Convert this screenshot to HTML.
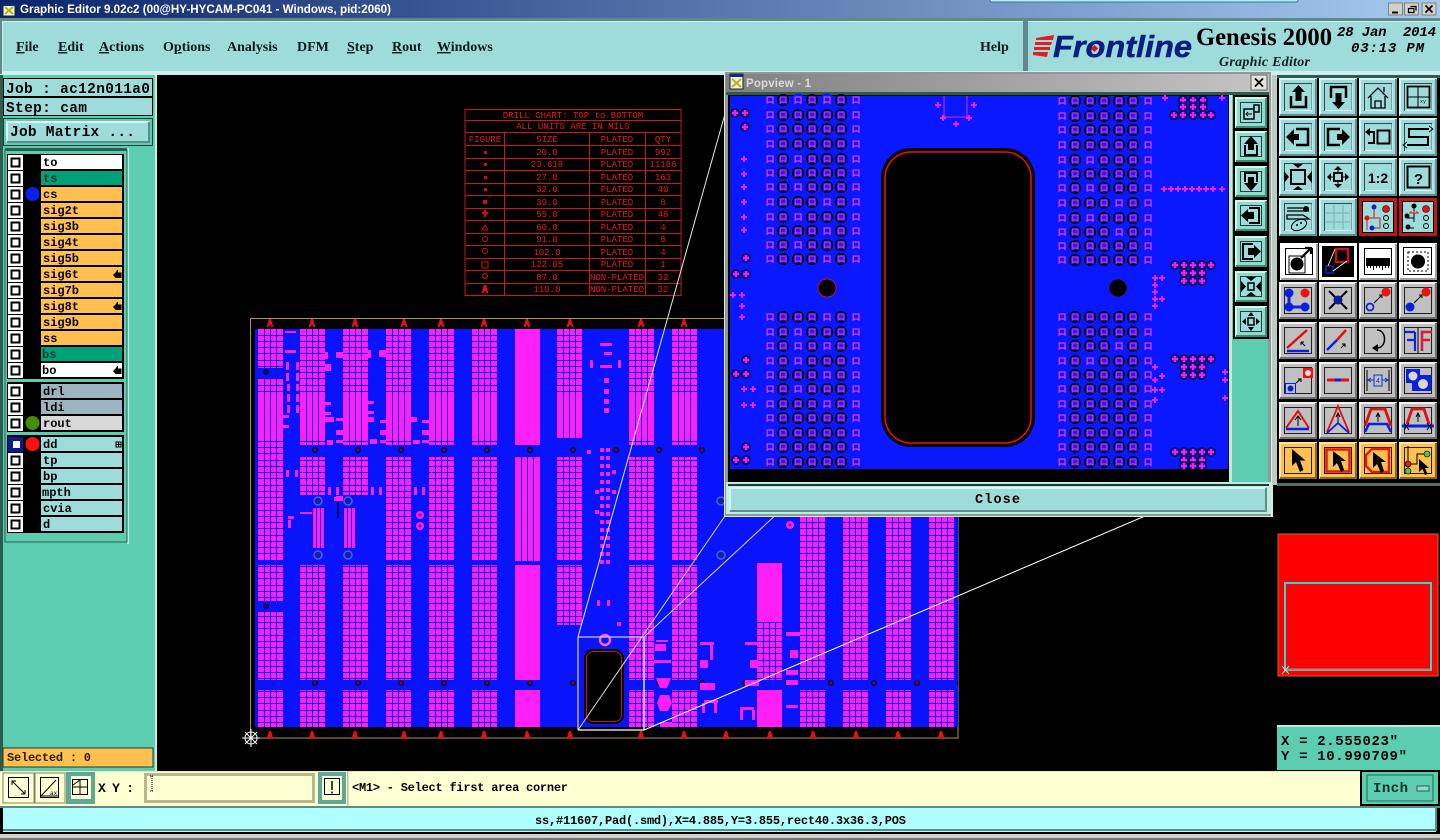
<!DOCTYPE html>
<html lang="en">
<head>
<meta charset="utf-8">
<title>Graphic Editor 9.02c2</title>
<style>
html,body{margin:0;padding:0;background:#000;width:1440px;height:840px;overflow:hidden}
svg{display:block;position:absolute;left:0;top:0}
text{white-space:pre}
.mono{font-family:"Liberation Mono",monospace;font-weight:bold;fill:#000}
.lay{font-family:"Liberation Mono",monospace;font-weight:bold;font-size:12px;fill:#000}
.menu{font-family:"Liberation Serif",serif;font-weight:bold;font-size:14px;fill:#0b1a1a}
.dr{font-family:"Liberation Mono",monospace;font-size:9px;fill:#ee1818;text-anchor:middle}
</style>
</head>
<body>
<svg width="1440" height="840" viewBox="0 0 1440 840" xmlns="http://www.w3.org/2000/svg">
<defs>
<linearGradient id="tb" x1="0" x2="1" y1="0" y2="0"><stop offset="0" stop-color="#0a246a"/><stop offset="1" stop-color="#a6caf0"/></linearGradient>
<linearGradient id="tg" x1="0" x2="1" y1="0" y2="0"><stop offset="0" stop-color="#808080"/><stop offset="1" stop-color="#c4c4c4"/></linearGradient>
<pattern id="g" x="0" y="329" width="25" height="25" patternUnits="userSpaceOnUse"><rect width="25" height="25" fill="#ff20f8"/><path d="M6 0h1v25h-1zM12 0h1v25h-1zM18 0h1v25h-1zM0 6h25v1h-25zM0 12h25v1h-25zM0 18h25v1h-25zM0 24h25v1h-25z" fill="#0a14fa"/></pattern>
<pattern id="s" x="0" y="329" width="25" height="25" patternUnits="userSpaceOnUse"><rect width="25" height="25" fill="#ff20f8"/><path d="M6 0h1v25h-1zM12 0h1v25h-1zM18 0h1v25h-1z" fill="#0a14fa"/></pattern>
<pattern id="d" x="0" y="457" width="12" height="12" patternUnits="userSpaceOnUse"><rect x="2" y="3" width="1" height="1" fill="#e0104a"/><rect x="8" y="9" width="1" height="1" fill="#e0104a"/></pattern>
<g id="colA"><rect y="329" width="25" height="64" fill="url(#g)"/><rect y="393" width="25" height="45" fill="url(#s)"/><rect y="438" width="25" height="7" fill="url(#g)"/><rect y="457" width="25" height="38" fill="url(#g)"/><rect y="457" width="25" height="38" fill="url(#d)"/><rect y="565" width="25" height="115" fill="url(#g)"/><rect y="690" width="25" height="37" fill="url(#g)"/></g>
<g id="colB"><use href="#colA"/><rect y="495" width="25" height="66" fill="url(#g)"/></g>
<pattern id="via" x="293.5" y="0" width="43" height="840" patternUnits="userSpaceOnUse"><circle cx="21.5" cy="450" r="3.2" fill="#0a0a50"/><circle cx="21.5" cy="450" r="1.4" fill="#800040"/><circle cx="21.5" cy="683" r="3.2" fill="#0a0a50"/><circle cx="21.5" cy="683" r="1.4" fill="#800040"/></pattern>
<path id="tri" d="M-3.5 4L-1 -4H1L3.500 4H1.500L.8 2H-.8L-1.500 4Z" fill="#e81010"/>
<g id="pl"><path d="M-2.800 -3H3V3L1.500 2H-1.500L-2.800 3Z" fill="none" stroke="#e838ff" stroke-width="1.300"/></g>
<g id="ri"><circle r="6" fill="#000018"/><circle r="3.800" fill="#3a10f4"/><path d="M-2.800 -3H3V3L1.500 2H-1.500L-2.800 3Z" fill="none" stroke="#b038ff" stroke-width="1.300"/></g>
<g id="bl"><circle r="6.500" fill="#0a18ff"/><use href="#pl"/></g>
<g id="row"><use href="#pl" x="-13"/><use href="#ri" x="0"/><use href="#ri" x="15"/><use href="#ri" x="29"/><use href="#ri" x="44"/><use href="#ri" x="58"/><use href="#pl" x="73"/></g>
<g id="blkU"><use href="#row" y="0"/><use href="#row" y="15"/><use href="#row" y="29"/><use href="#row" y="44"/><use href="#row" y="59"/><use href="#row" y="73"/><use href="#row" y="87"/><use href="#row" y="102"/><use href="#row" y="117"/><use href="#row" y="131"/><use href="#row" y="145"/><use href="#row" y="159"/></g>
<g id="blkL"><use href="#row" y="0"/><use href="#row" y="15"/><use href="#row" y="29"/><use href="#row" y="44"/><use href="#row" y="58"/><use href="#row" y="72"/><use href="#row" y="87"/><use href="#row" y="101"/><use href="#row" y="116"/><use href="#row" y="130"/><use href="#row" y="145"/></g>
<path id="plus" d="M-1 -3H1V-1H3V1H1V3H-1V1H-3V-1H-1Z" fill="#f020ff"/>
<g id="rp"><circle r="4.800" fill="#04042a"/><circle r="3.500" fill="#5010d0"/><use href="#plus"/></g>

<g id="bt"><rect width="38" height="38" fill="#9edcdc"/><path d="M1 37V1H37" fill="none" stroke="#d6f6f6" stroke-width="2"/><path d="M37 1V37H1" fill="none" stroke="#5f8c8c" stroke-width="2"/><rect x="5.500" y="5.500" width="27" height="27" fill="none" stroke="#2a4a4a"/><path d="M6 32.500H33V6" fill="none" stroke="#d6f6f6"/></g>
<g id="bg"><rect width="38" height="37" fill="#c0c0c0"/><path d="M1 36V1H37" fill="none" stroke="#f2f2f2" stroke-width="2"/><path d="M37 1V36H1" fill="none" stroke="#707070" stroke-width="2"/><rect x="5.500" y="5.500" width="27" height="26" fill="none" stroke="#202020"/></g>
<g id="bw"><rect width="38" height="37" fill="#fff"/><path d="M37 1V36H1" fill="none" stroke="#a0a0a0" stroke-width="2"/></g>
<g id="bo"><rect width="38" height="37" fill="#ffc050"/><path d="M1 36V1H37" fill="none" stroke="#ffe4a8" stroke-width="2"/><path d="M37 1V36H1" fill="none" stroke="#8a6a20" stroke-width="2"/><rect x="5.500" y="5.500" width="27" height="26" fill="none" stroke="#202020"/></g>
<g id="bs"><rect width="32" height="31" fill="#8fdcc8"/><path d="M1 30V1H31" fill="none" stroke="#d4f6ec" stroke-width="2"/><path d="M31 1V30H1" fill="none" stroke="#3e8c78" stroke-width="2"/><rect x="5.500" y="5.500" width="21" height="20" fill="#9edcdc" stroke="#204040"/></g>
<path id="hand" d="M0 5L3 2L4 0H5V2.500H8.500V8H2.500Z" fill="#000"/>
<g id="cb"><rect width="15" height="15" fill="#fff"/><rect x="3.500" y="3.500" width="8" height="8" fill="#fff" stroke="#000" stroke-width="2"/></g>
</defs>

<!-- base -->
<rect width="1440" height="840" fill="#000"/>
<!-- title bar -->
<rect width="1440" height="18" fill="url(#tb)"/>
<rect x="990" y="-4" width="308" height="6" rx="2" fill="#c8e4f6" stroke="#1c7fb0"/>
<rect x="3" y="3" width="12" height="13" fill="#f0f0f0" stroke="#222"/><rect x="3" y="3" width="12" height="3" fill="#102a80"/><path d="M5 7L13 14M13 7L5 14" stroke="#b8b800" stroke-width="2"/>
<text x="20" y="13" font-family="Liberation Sans,sans-serif" font-size="12" font-weight="bold" fill="#fff" textLength="371" lengthAdjust="spacingAndGlyphs">Graphic Editor 9.02c2 (00@HY-HYCAM-PC041 - Windows, pid:2060)</text>
<g fill="#d4d0c8" stroke="#555" stroke-width=".6"><rect x="1388.500" y="3" width="14" height="12"/><rect x="1404.500" y="3" width="14" height="12"/><rect x="1422" y="3" width="14" height="12"/></g>
<path d="M1392 12.500H1398" stroke="#000" stroke-width="2"/><path d="M1408.500 8.500H1414V12.500H1408.500ZM1410.500 6.500H1416V10.500" fill="none" stroke="#000" stroke-width="1.200"/><path d="M1425.500 5.500L1432.500 12.500M1432.500 5.500L1425.500 12.500" stroke="#000" stroke-width="1.700"/>

<!-- menu bar -->
<rect y="18" width="1440" height="57" fill="#cfeeee"/>
<rect y="18" width="1440" height="3" fill="#5e8a8a"/>
<rect x="0" y="18" width="2" height="56" fill="#5e8a8a"/>
<rect x="3" y="22" width="1020" height="49" fill="#9edcdc"/>
<rect x="1023" y="20" width="5" height="52" fill="#5e8a8a"/>
<rect x="1028" y="22" width="412" height="49" fill="#9edcdc"/>
<g class="menu">
<text class="menu" x="16" y="51"><tspan text-decoration="underline">F</tspan>ile</text>
<text class="menu" x="58" y="51"><tspan text-decoration="underline">E</tspan>dit</text>
<text class="menu" x="99" y="51"><tspan text-decoration="underline">A</tspan>ctions</text>
<text class="menu" x="163" y="51">O<tspan text-decoration="underline">p</tspan>tions</text>
<text class="menu" x="227" y="51">Analysis</text>
<text class="menu" x="297" y="51">DFM</text>
<text class="menu" x="347" y="51"><tspan text-decoration="underline">S</tspan>tep</text>
<text class="menu" x="392" y="51"><tspan text-decoration="underline">R</tspan>out</text>
<text class="menu" x="437" y="51"><tspan text-decoration="underline">W</tspan>indows</text>
<text class="menu" x="980" y="51">Help</text>
</g>
<!-- logo -->
<path d="M1054 35L1036 38V40H1053ZM1052 42H1035V45H1051ZM1050 47H1034V50H1050ZM1048 52H1033V55L1047 57Z" fill="#e02020"/>
<text x="1053" y="57" font-family="Liberation Sans,sans-serif" font-size="31" font-weight="bold" font-style="italic" fill="#0b1f80" stroke="#0b1f80" stroke-width=".5" textLength="139" lengthAdjust="spacingAndGlyphs">Frontline</text>
<rect x="1092" y="46" width="5" height="5" fill="#e01010" transform="rotate(45 1094.500 48.500)"/>
<text x="1196" y="45" font-family="Liberation Serif,serif" font-size="25" font-weight="bold" fill="#000" textLength="136" lengthAdjust="spacingAndGlyphs">Genesis 2000</text>
<text x="1219" y="66" font-family="Liberation Serif,serif" font-size="14" font-weight="bold" font-style="italic" fill="#102020" textLength="91">Graphic Editor</text>
<text x="1337" y="36" font-family="Liberation Mono,monospace" font-size="14" font-weight="bold" font-style="italic" fill="#000" textLength="99">28 Jan  2014</text>
<text x="1351" y="52" font-family="Liberation Mono,monospace" font-size="14" font-weight="bold" font-style="italic" fill="#000" textLength="73">03:13 PM</text>

<!-- left panel -->
<rect x="0" y="75" width="155" height="696" fill="#5ccdb0"/>
<rect x="155" y="75" width="2" height="696" fill="#c8eee0"/>
<rect x="0" y="75" width="3" height="696" fill="#2c5c50"/>
<rect x="3" y="78" width="150" height="38" fill="#000"/>
<rect x="4" y="79" width="148" height="17" fill="#9edcdc"/>
<rect x="4" y="98" width="148" height="17" fill="#9edcdc"/>
<text class="mono" x="6" y="93" font-size="14.500" textLength="144">Job : ac12n011a0</text>
<text class="mono" x="6" y="112" font-size="14.500" textLength="81">Step: cam</text>
<rect x="3.500" y="118.500" width="149" height="27" fill="#5ccdb0" stroke="#1c3c34"/>
<rect x="6" y="121" width="144" height="22" fill="#9edcdc"/><path d="M7 142V122H149" fill="none" stroke="#d6f6f6" stroke-width="2"/><path d="M149 122V142H7" fill="none" stroke="#5f8c8c" stroke-width="2"/>
<text class="mono" x="10" y="136" font-size="14.500" textLength="125">Job Matrix ...</text>

<rect x="127" y="148" width="2" height="396" fill="#bdeedd"/>
<rect x="5" y="150" width="122" height="392" fill="#5ccdb0" stroke="#2c5c50"/>
<rect x="5" y="148" width="122" height="3" fill="#2c5c50"/>
<rect x="7" y="154" width="117" height="225" fill="#000"/>
<rect x="7" y="382" width="117" height="50" fill="#000"/>
<rect x="7" y="435" width="117" height="98" fill="#000"/>

<g fill="#ffc050">
<rect x="41" y="155" width="81" height="14" fill="#fff"/>
<rect x="41" y="171" width="81" height="14" fill="#00a078"/>
<rect x="41" y="187" width="81" height="14"/><rect x="41" y="203" width="81" height="14"/><rect x="41" y="219" width="81" height="14"/><rect x="41" y="235" width="81" height="14"/><rect x="41" y="251" width="81" height="14"/><rect x="41" y="267" width="81" height="14"/><rect x="41" y="283" width="81" height="14"/><rect x="41" y="299" width="81" height="14"/><rect x="41" y="315" width="81" height="14"/><rect x="41" y="331" width="81" height="14"/>
<rect x="41" y="347" width="81" height="14" fill="#00a078"/>
<rect x="41" y="363" width="81" height="14" fill="#fff"/>
<rect x="41" y="384" width="81" height="14" fill="#9cb4c0"/>
<rect x="41" y="400" width="81" height="14" fill="#9cb4c0"/>
<rect x="41" y="416" width="81" height="14" fill="#d8d8d8"/>
</g>
<g fill="#9edcdc"><rect x="41" y="437" width="81" height="14"/><rect x="41" y="453" width="81" height="14"/><rect x="41" y="469" width="81" height="14"/><rect x="41" y="485" width="81" height="14"/><rect x="41" y="501" width="81" height="14"/><rect x="41" y="517" width="81" height="14"/></g>
<use href="#cb" x="8" y="155"/><use href="#cb" x="8" y="171"/><use href="#cb" x="8" y="187"/><use href="#cb" x="8" y="203"/><use href="#cb" x="8" y="219"/><use href="#cb" x="8" y="235"/><use href="#cb" x="8" y="251"/><use href="#cb" x="8" y="267"/><use href="#cb" x="8" y="283"/><use href="#cb" x="8" y="299"/><use href="#cb" x="8" y="315"/><use href="#cb" x="8" y="331"/><use href="#cb" x="8" y="347"/><use href="#cb" x="8" y="363"/>
<use href="#cb" x="8" y="384"/><use href="#cb" x="8" y="400"/><use href="#cb" x="8" y="416"/>
<rect x="8" y="437" width="15" height="15" fill="#0a1a90"/><rect x="13" y="441" width="7" height="7" fill="#fff"/>
<use href="#cb" x="8" y="453"/><use href="#cb" x="8" y="469"/><use href="#cb" x="8" y="485"/><use href="#cb" x="8" y="501"/><use href="#cb" x="8" y="517"/>
<circle cx="32.500" cy="194" r="7" fill="#0a20f0"/>
<circle cx="32.500" cy="423" r="7" fill="#409000"/>
<circle cx="32.500" cy="444" r="7" fill="#ff1010"/>
<text class="lay" x="43" y="166">to</text>
<text class="lay" x="43" y="182" style="fill:#0a3a30">ts</text>
<text class="lay" x="43" y="198">cs</text>
<text class="lay" x="43" y="214">sig2t</text>
<text class="lay" x="43" y="230">sig3b</text>
<text class="lay" x="43" y="246">sig4t</text>
<text class="lay" x="43" y="262">sig5b</text>
<text class="lay" x="43" y="278">sig6t</text>
<text class="lay" x="43" y="294">sig7b</text>
<text class="lay" x="43" y="310">sig8t</text>
<text class="lay" x="43" y="326">sig9b</text>
<text class="lay" x="43" y="342">ss</text>
<text class="lay" x="42" y="358" style="fill:#0a3a30">bs</text>
<text class="lay" x="42" y="374">bo</text>
<text class="lay" x="43" y="395">drl</text>
<text class="lay" x="43" y="411">ldi</text>
<text class="lay" x="43" y="427">rout</text>
<text class="lay" x="43" y="448">dd</text>
<text class="lay" x="43" y="464">tp</text>
<text class="lay" x="43" y="480">bp</text>
<text class="lay" x="42" y="496">mpth</text>
<text class="lay" x="43" y="512">cvia</text>
<text class="lay" x="43" y="528">d</text>
<use href="#hand" x="113" y="270"/><use href="#hand" x="113" y="302"/><use href="#hand" x="113" y="366"/>
<path d="M116 442H121V447H116ZM118.500 442V447M116 444.500H121" fill="none" stroke="#000"/>

<rect x="3" y="748" width="150" height="19" fill="#ffc050" stroke="#1c3c34"/>
<text class="mono" x="7" y="761" font-size="12" textLength="84" style="fill:#2a1a00">Selected : 0</text>

<!-- PCB -->
<rect x="250.500" y="318.500" width="707.500" height="419.500" fill="#000" stroke="#b09a30"/>
<rect x="255" y="329" width="703" height="398" fill="#0a14fa"/>
<!-- columns -->
<g transform="translate(258,0)"><rect y="329" width="25" height="39" fill="url(#g)"/><rect y="379" width="25" height="14" fill="url(#g)"/><rect y="393" width="25" height="45" fill="url(#s)"/><rect y="438" width="25" height="122" fill="url(#g)"/><rect y="565" width="25" height="36" fill="url(#g)"/><rect y="612" width="25" height="68" fill="url(#g)"/><rect y="690" width="25" height="37" fill="url(#g)"/></g>
<use href="#colA" x="300"/><use href="#colA" x="343"/>
<use href="#colB" x="386"/><use href="#colB" x="429"/><use href="#colB" x="472"/>
<g transform="translate(515,0)"><rect y="329" width="25" height="116" fill="#ff20f8"/><rect y="457" width="25" height="104" fill="url(#s)"/><rect y="565" width="25" height="115" fill="#ff20f8"/><rect y="690" width="25" height="37" fill="#ff20f8"/></g>
<g transform="translate(557,0)"><rect y="329" width="25" height="64" fill="url(#g)"/><rect y="393" width="25" height="45" fill="url(#s)"/><rect y="457" width="25" height="104" fill="url(#g)"/><rect y="565" width="25" height="60" fill="url(#g)"/></g>
<use href="#colB" x="629"/><use href="#colB" x="672"/>
<g transform="translate(757,0)"><rect y="563" width="25" height="59" fill="#ff20f8"/><rect y="622" width="25" height="58" fill="url(#g)"/><rect y="690" width="25" height="37" fill="#ff20f8"/></g>
<g transform="translate(800,0)"><rect y="516" width="25" height="164" fill="url(#g)"/><rect y="690" width="25" height="37" fill="url(#g)"/></g>
<g transform="translate(843,0)"><rect y="516" width="25" height="164" fill="url(#g)"/><rect y="690" width="25" height="37" fill="url(#g)"/></g>
<g transform="translate(886,0)"><rect y="516" width="25" height="164" fill="url(#g)"/><rect y="690" width="25" height="37" fill="url(#g)"/></g>
<g transform="translate(929,0)"><rect y="516" width="25" height="164" fill="url(#g)"/><rect y="690" width="25" height="37" fill="url(#g)"/></g>
<rect x="293" y="440" width="665" height="20" fill="url(#via)"/><rect x="293" y="676" width="665" height="14" fill="url(#via)"/>
<circle cx="266" cy="372" r="3" fill="#0a0a50"/><circle cx="266" cy="606" r="3" fill="#0a0a50"/>
<!-- misc copper -->
<path fill="#ff20f8" d="M285 331h11v2h-11zM285 350h11v3h-11zM286 362h3v8h-3zM296 362h3v8h-3zM286 373h3v8h-3zM296 373h3v8h-3zM287 384h3v7h-3zM296 384h3v7h-3zM287 394h3v8h-3zM296 394h3v8h-3zM287 405h3v8h-3zM296 405h3v8h-3zM283 415h6v3h-6zM283 425h6v3h-6zM325 352h3v7h-3zM336 352h7v6h-7zM325 364h6v7h-6zM325 402h6v3h-6zM325 412h6v3h-6zM325 417h9v5h-9zM336 418h7v3h-7zM336 430h7v5h-7zM327 440h6v5h-6zM336 440h7v3h-7zM368 350h3v8h-3zM379 350h7v7h-7zM368 401h6v3h-6zM368 411h6v3h-6zM368 417h6v5h-6zM380 420h6v3h-6zM380 430h6v5h-6zM370 439h7v5h-7zM380 440h6v3h-6zM410 417h7v5h-7zM422 420h7v3h-7zM422 430h7v5h-7zM413 440h7v4h-7zM422 440h7v3h-7zM286 470h3v7h-3zM295 470h3v7h-3zM328 487h3v8h-3zM336 487h3v8h-3zM371 487h3v8h-3zM379 487h3v8h-3zM414 487h3v8h-3zM422 487h3v8h-3zM288 516h6v3h-6zM288 520h3v8h-3zM300 512h12v2h-12zM336 496h7v4h-7z"/>
<g fill="#ff20f8"><rect x="313" y="508" width="3" height="40"/><rect x="317" y="508" width="3" height="40"/><rect x="321" y="508" width="3" height="40"/><rect x="344" y="508" width="3" height="40"/><rect x="348" y="508" width="3" height="40"/><rect x="352" y="508" width="3" height="40"/></g>
<g fill="#1020a0" stroke="#4060ff" stroke-width="1.500"><circle cx="318" cy="501" r="4"/><circle cx="348" cy="501" r="4"/><circle cx="318" cy="555" r="4"/><circle cx="348" cy="555" r="4"/><circle cx="721" cy="555" r="4"/><circle cx="721" cy="501" r="4"/></g>
<path d="M338 498V518" stroke="#000" stroke-width="1.200"/><path d="M334 497h9v4h-9z" fill="#ff20f8"/>
<g fill="#ff20f8"><circle cx="420" cy="515" r="4"/><circle cx="420" cy="526" r="4"/><circle cx="790" cy="525" r="4"/></g><g fill="#900030"><circle cx="420" cy="515" r="1.500"/><circle cx="420" cy="526" r="1.500"/><circle cx="790" cy="525" r="1.500"/></g>
<!-- centre column -->
<g fill="#ff20f8">
<path d="M600 343h12v3h-12zM604 352h8v3h-8zM600 365h12v3h-12zM604 378h5v5h-5zM604 389h5v5h-5zM604 399h5v5h-5zM604 408h5v5h-5zM590 360h3v8h-3zM618 360h3v8h-3z"/>
</g>
<g fill="#ff20f8">
<rect x="587" y="450" width="4" height="4"/><rect x="600" y="448" width="4" height="4"/><rect x="606" y="448" width="4" height="4"/><rect x="600" y="456" width="4" height="4"/><rect x="606" y="456" width="4" height="4"/><rect x="600" y="464" width="4" height="4"/><rect x="606" y="464" width="4" height="4"/><rect x="600" y="472" width="4" height="4"/><rect x="606" y="472" width="4" height="4"/><rect x="600" y="480" width="4" height="4"/><rect x="606" y="480" width="4" height="4"/><rect x="600" y="488" width="4" height="4"/><rect x="606" y="488" width="4" height="4"/><rect x="600" y="496" width="4" height="4"/><rect x="606" y="496" width="4" height="4"/><rect x="600" y="504" width="4" height="4"/><rect x="606" y="504" width="4" height="4"/><rect x="600" y="512" width="4" height="4"/><rect x="606" y="512" width="4" height="4"/><rect x="600" y="520" width="4" height="4"/><rect x="606" y="520" width="4" height="4"/><rect x="600" y="528" width="4" height="4"/><rect x="606" y="528" width="4" height="4"/><rect x="600" y="536" width="4" height="4"/><rect x="606" y="536" width="4" height="4"/><rect x="600" y="544" width="4" height="4"/><rect x="606" y="544" width="4" height="4"/><rect x="600" y="552" width="4" height="4"/><rect x="606" y="552" width="4" height="4"/><rect x="600" y="560" width="4" height="4"/><rect x="606" y="560" width="4" height="4"/><rect x="612" y="470" width="4" height="4"/><rect x="612" y="490" width="4" height="4"/><rect x="595" y="490" width="4" height="4"/><rect x="595" y="510" width="4" height="4"/>
<rect x="597" y="600" width="3" height="6"/><rect x="607" y="600" width="3" height="6"/><rect x="617" y="622" width="4" height="4"/>
</g>
<!-- hole board -->
<path d="M656 640h12v2h-12zM655 644h11v7h-11zM654 660h17v3h-17zM656 678l4 10h7l4-10zM657 703l3-8h9l3 8-4 8h-8zM660 722h12v5h-12zM700 642h14v3h-14zM710 645h3v15h-3zM700 660h8v8h-8zM700 683h15v7h-15zM704 700h14v3h-14zM702 703h3v10h-3zM714 703h3v10h-3zM745 642h14v3h-14zM750 660h8v8h-8zM745 680h14v6h-14zM740 707h14v3h-14zM740 710h3v10h-3zM752 710h3v10h-3zM786 632h14v4h-14zM790 650h8v8h-8zM786 670h12v5h-12zM786 680h12v5h-12zM786 705h12v3h-12z" fill="#ff20f8"/>
<circle cx="605" cy="640" r="5" fill="none" stroke="#ff60e0" stroke-width="2.500"/>
<rect x="584" y="649" width="40" height="75" rx="9" fill="#000"/>
<rect x="586.500" y="651.500" width="35" height="70" rx="7" fill="none" stroke="#c81030"/>
<!-- triangles -->
<g>
<use href="#tri" x="270" y="323"/><use href="#tri" x="312" y="323"/><use href="#tri" x="355" y="323"/><use href="#tri" x="404" y="323"/><use href="#tri" x="441" y="323"/><use href="#tri" x="484" y="323"/><use href="#tri" x="527" y="323"/><use href="#tri" x="570" y="323"/><use href="#tri" x="641" y="323"/><use href="#tri" x="684" y="323"/>
<use href="#tri" x="270" y="735"/><use href="#tri" x="312" y="735"/><use href="#tri" x="355" y="735"/><use href="#tri" x="404" y="735"/><use href="#tri" x="441" y="735"/><use href="#tri" x="484" y="735"/><use href="#tri" x="527" y="735"/><use href="#tri" x="570" y="735"/><use href="#tri" x="641" y="735"/><use href="#tri" x="684" y="735"/><use href="#tri" x="726" y="735"/><use href="#tri" x="770" y="735"/><use href="#tri" x="813" y="735"/><use href="#tri" x="856" y="735"/><use href="#tri" x="898" y="735"/><use href="#tri" x="941" y="735"/>
</g>
<!-- origin -->
<g stroke="#fff" fill="none" stroke-width="1"><circle cx="251" cy="738" r="6"/><path d="M242 738H260M251 729V747M245 732L257 744M257 732L245 744"/></g>

<!-- drill chart -->
<g fill="none" stroke="#c81818" stroke-width="1">
<rect x="465" y="109.500" width="216" height="186"/>
<path d="M465 120.500H681M465 132.500H681M465 145.500H681M465 158.500H681M465 170.500H681M465 183.500H681M465 195.500H681M465 208.500H681M465 220.500H681M465 233.500H681M465 245.500H681M465 258.500H681M465 270.500H681M465 283.500H681"/>
<path d="M504.500 132V295M589.500 132V295M645.500 132V295"/>
</g>
<g class="dr">
<text class="dr" x="573" y="118">DRILL CHART: TOP to BOTTOM</text>
<text class="dr" x="573" y="129">ALL UNITS ARE IN MILS</text>
<text class="dr" x="485" y="142">FIGURE</text><text class="dr" x="547" y="142">SIZE</text><text class="dr" x="617" y="142">PLATED</text><text class="dr" x="663" y="142">QTY</text>
<text class="dr" x="547" y="155">20.0</text><text class="dr" x="617" y="155">PLATED</text><text class="dr" x="663" y="155">992</text>
<text class="dr" x="547" y="167">23.618</text><text class="dr" x="617" y="167">PLATED</text><text class="dr" x="663" y="167">11186</text>
<text class="dr" x="547" y="180">27.0</text><text class="dr" x="617" y="180">PLATED</text><text class="dr" x="663" y="180">163</text>
<text class="dr" x="547" y="192">32.0</text><text class="dr" x="617" y="192">PLATED</text><text class="dr" x="663" y="192">40</text>
<text class="dr" x="547" y="205">39.0</text><text class="dr" x="617" y="205">PLATED</text><text class="dr" x="663" y="205">8</text>
<text class="dr" x="547" y="217">55.0</text><text class="dr" x="617" y="217">PLATED</text><text class="dr" x="663" y="217">48</text>
<text class="dr" x="547" y="230">60.0</text><text class="dr" x="617" y="230">PLATED</text><text class="dr" x="663" y="230">4</text>
<text class="dr" x="547" y="242">91.0</text><text class="dr" x="617" y="242">PLATED</text><text class="dr" x="663" y="242">6</text>
<text class="dr" x="547" y="255">102.0</text><text class="dr" x="617" y="255">PLATED</text><text class="dr" x="663" y="255">4</text>
<text class="dr" x="547" y="267">122.05</text><text class="dr" x="617" y="267">PLATED</text><text class="dr" x="663" y="267">1</text>
<text class="dr" x="547" y="280">87.0</text><text class="dr" x="617" y="280">NON-PLATED</text><text class="dr" x="663" y="280">32</text>
<text class="dr" x="547" y="292">110.0</text><text class="dr" x="617" y="292">NON-PLATED</text><text class="dr" x="663" y="292">32</text>
</g>
<g fill="#d01010"><rect x="484" y="151" width="3" height="3"/><rect x="484" y="163" width="3" height="3"/><rect x="484" y="176" width="3" height="3"/><rect x="484" y="188" width="3" height="3"/><rect x="483" y="200" width="4" height="4"/></g>
<path d="M482 213H488M485 210V217" stroke="#d01010" stroke-width="2"/>
<path d="M485 225L482 230H488Z" fill="none" stroke="#d01010"/>
<g fill="none" stroke="#d01010"><circle cx="485" cy="239" r="2.500"/><circle cx="485" cy="251" r="2.500"/><rect x="482" y="262" width="6" height="6"/><circle cx="485" cy="276" r="2.500"/></g>
<use href="#tri" x="485" y="289"/>

<!-- zoom lines and box -->
<g fill="none" stroke="#fff" stroke-width="1">
<path d="M578 637L730 96" stroke="#e8e8e8"/><path d="M578 730L725 516" stroke="#d8d8d8"/><path d="M644 637L1228 96" stroke="#d8d8d8"/><path d="M644 730L1145 516"/>
<path d="M578 730V637H644" stroke="#c8c8c8" stroke-width="1.300"/>
<path d="M644 637V730H578" stroke-width="1.300"/>
</g>

<!-- popup window -->
<rect x="724" y="71" width="549" height="446" fill="#e0e8e4"/>
<rect x="725" y="72" width="546" height="444" fill="#8a9a96"/>
<rect x="726" y="74" width="543" height="18" fill="url(#tg)"/>
<rect x="726" y="92" width="543" height="3" fill="#2c5c50"/>
<rect x="730" y="74" width="13" height="15" fill="#f0f0f0" stroke="#222"/><rect x="730" y="74" width="13" height="3" fill="#102a80"/><path d="M732 79L741 87M741 79L732 87" stroke="#b8b800" stroke-width="2"/>
<text x="746" y="87" font-family="Liberation Sans,sans-serif" font-size="11.500" font-weight="bold" fill="#dcdcdc" textLength="65">Popview - 1</text>
<rect x="1251" y="75" width="16" height="15" fill="#e4e4de" stroke="#606060"/><path d="M1255 78.500L1263 86.500M1263 78.500L1255 86.500" stroke="#000" stroke-width="1.800"/>
<rect x="728" y="95" width="540" height="388" fill="#000"/>
<rect x="730" y="96" width="498" height="373" fill="#0a18ff"/>
<rect x="1232" y="95" width="36" height="389" fill="#5ccdb0"/>
<rect x="1229" y="95" width="3" height="389" fill="#bdeedd"/>
<rect x="1233" y="95" width="36" height="244" fill="#000"/>
<rect x="726" y="482" width="545" height="32" fill="#bdeedd"/>
<rect x="728" y="484" width="541" height="2" fill="#1c3c34"/>
<rect x="729" y="487" width="538" height="25" fill="#9edcdc"/><path d="M730 511V488H1266" fill="none" stroke="#d6f6f6" stroke-width="2"/><path d="M1266 488V511H730" fill="none" stroke="#5f8c8c" stroke-width="2"/>
<text class="mono" x="975" y="503" font-size="13.500" textLength="45">Close</text>

<!-- popup side buttons -->
<g transform="translate(1235,97)"><use href="#bs"/><path d="M9 12H19V22H9ZM19 12V8H24V15H19" fill="none" stroke="#000" stroke-width="1.500"/><path d="M17 17H11M13 15L11 17L13 19" fill="none" stroke="#000"/></g>
<g transform="translate(1235,131)"><use href="#bs"/><path d="M10 14V24H22V14" fill="none" stroke="#000" stroke-width="2"/><path d="M16 5L9 13H23ZM13 13H19V19H13Z" fill="#000"/></g>
<g transform="translate(1235,166)"><use href="#bs"/><path d="M10 16V7H22V16" fill="none" stroke="#000" stroke-width="2"/><path d="M16 25L9 17H23ZM13 17H19V11H13Z" fill="#000"/></g>
<g transform="translate(1235,200)"><use href="#bs"/><path d="M14 8H24V23H14" fill="none" stroke="#000" stroke-width="2"/><path d="M6 15.500L13 9V22ZM13 12H19V19H13Z" fill="#000"/></g>
<g transform="translate(1235,236)"><use href="#bs"/><path d="M18 8H8V23H18" fill="none" stroke="#000" stroke-width="2"/><path d="M26 15.500L19 9V22ZM19 12H13V19H19Z" fill="#000"/></g>
<g transform="translate(1235,271)"><use href="#bs"/><rect x="13" y="12" width="6" height="7" fill="none" stroke="#000" stroke-width="1.500"/><path d="M16 10L11 6H21ZM16 21L11 25H21ZM11 15.500L6 10V21ZM21 15.500L26 10V21Z" fill="#000"/></g>
<g transform="translate(1235,306)"><use href="#bs"/><rect x="13" y="12" width="6" height="7" fill="none" stroke="#000" stroke-width="1.500"/><path d="M16 6L13 10H19ZM16 25L13 21H19ZM7 15.500L11 12V19ZM25 15.500L21 12V19Z" fill="#000"/></g>

<!-- pads -->
<use href="#blkU" x="783" y="100"/>
<use href="#blkL" x="783" y="317"/>
<use href="#blkU" x="1075" y="101"/>
<use href="#blkL" x="1075" y="317"/>
<!-- ring-less spots -->
<use href="#bl" x="798" y="100"/><use href="#bl" x="827" y="100"/><use href="#bl" x="798" y="159"/><use href="#bl" x="798" y="187"/><use href="#bl" x="827" y="202"/><use href="#bl" x="798" y="217"/><use href="#bl" x="827" y="231"/><use href="#bl" x="798" y="245"/><use href="#bl" x="827" y="259"/>
<use href="#bl" x="827" y="317"/><use href="#bl" x="798" y="332"/><use href="#bl" x="798" y="346"/><use href="#bl" x="827" y="346"/><use href="#bl" x="798" y="361"/><use href="#bl" x="827" y="375"/><use href="#bl" x="798" y="389"/><use href="#bl" x="827" y="404"/>
<use href="#bl" x="1090" y="160"/><use href="#bl" x="1090" y="188"/><use href="#bl" x="1119" y="203"/><use href="#bl" x="1090" y="218"/><use href="#bl" x="1119" y="232"/><use href="#bl" x="1119" y="346"/><use href="#bl" x="1090" y="361"/>
<!-- left plus -->
<use href="#rp" x="735" y="113"/><use href="#rp" x="745" y="113"/><use href="#rp" x="745" y="127"/><use href="#plus" x="744" y="159"/><use href="#plus" x="744" y="174"/><use href="#plus" x="744" y="187"/><use href="#plus" x="744" y="202"/><use href="#plus" x="744" y="217"/><use href="#plus" x="744" y="230"/><use href="#rp" x="746" y="258"/><use href="#rp" x="736" y="274"/><use href="#rp" x="746" y="274"/>
<use href="#plus" x="733" y="295"/><use href="#plus" x="742" y="295"/><use href="#plus" x="742" y="306"/><use href="#plus" x="742" y="317"/><use href="#rp" x="746" y="360"/><use href="#rp" x="736" y="374"/><use href="#rp" x="746" y="374"/><use href="#plus" x="744" y="389"/><use href="#plus" x="753" y="389"/><use href="#plus" x="744" y="405"/><use href="#plus" x="753" y="405"/><use href="#rp" x="746" y="447"/><use href="#rp" x="736" y="460"/><use href="#rp" x="746" y="460"/>
<!-- top small part -->
<path d="M944 96V117H967V96M944 117H967" fill="none" stroke="#f020ff"/>
<use href="#plus" x="938" y="105"/><use href="#plus" x="974" y="105"/><use href="#plus" x="943" y="118"/><use href="#plus" x="969" y="118"/><use href="#plus" x="956" y="124"/>
<!-- hole -->
<rect x="881" y="148" width="154" height="299" rx="30" fill="#000"/>
<rect x="885" y="152" width="146" height="291" rx="26" fill="none" stroke="#f01010" stroke-width="1.500"/>
<circle cx="827" cy="288" r="9" fill="#000" stroke="#c01030"/>
<circle cx="1118" cy="288" r="9" fill="#000" stroke="#3a10a0" stroke-width="1"/>
<!-- right clusters -->
<use href="#rp" x="1183" y="100"/><use href="#rp" x="1193" y="100"/><use href="#rp" x="1203" y="100"/><use href="#plus" x="1165" y="98"/><use href="#plus" x="1222" y="98"/><use href="#rp" x="1183" y="107"/><use href="#rp" x="1193" y="107"/><use href="#rp" x="1203" y="107"/><use href="#rp" x="1174" y="115"/><use href="#rp" x="1183" y="115"/><use href="#rp" x="1193" y="115"/><use href="#rp" x="1203" y="115"/><use href="#rp" x="1211" y="115"/>
<use href="#plus" x="1164" y="189"/><use href="#plus" x="1171" y="189"/><use href="#plus" x="1178" y="189"/><use href="#plus" x="1185" y="189"/><use href="#plus" x="1192" y="189"/><use href="#plus" x="1199" y="189"/><use href="#plus" x="1206" y="189"/><use href="#plus" x="1213" y="189"/><use href="#plus" x="1222" y="189"/>
<use href="#rp" x="1175" y="265"/><use href="#rp" x="1184" y="265"/><use href="#rp" x="1193" y="265"/><use href="#rp" x="1202" y="265"/><use href="#rp" x="1211" y="265"/><use href="#rp" x="1184" y="273"/><use href="#rp" x="1193" y="273"/><use href="#rp" x="1202" y="273"/><use href="#rp" x="1184" y="281"/><use href="#rp" x="1193" y="281"/><use href="#rp" x="1202" y="281"/>
<use href="#plus" x="1155" y="278"/><use href="#plus" x="1162" y="278"/><use href="#plus" x="1155" y="285"/><use href="#plus" x="1155" y="292"/><use href="#plus" x="1155" y="299"/><use href="#plus" x="1162" y="299"/><use href="#plus" x="1155" y="306"/>
<use href="#rp" x="1175" y="359"/><use href="#rp" x="1184" y="359"/><use href="#rp" x="1193" y="359"/><use href="#rp" x="1202" y="359"/><use href="#rp" x="1211" y="359"/><use href="#rp" x="1184" y="367"/><use href="#rp" x="1193" y="367"/><use href="#rp" x="1202" y="367"/><use href="#rp" x="1184" y="375"/><use href="#rp" x="1193" y="375"/><use href="#rp" x="1202" y="375"/>
<use href="#plus" x="1155" y="367"/><use href="#plus" x="1162" y="376"/><use href="#plus" x="1155" y="380"/><use href="#plus" x="1155" y="390"/><use href="#plus" x="1162" y="390"/><use href="#plus" x="1155" y="400"/><use href="#plus" x="1225" y="372"/><use href="#plus" x="1225" y="380"/><use href="#plus" x="1225" y="398"/>
<use href="#rp" x="1175" y="452"/><use href="#rp" x="1184" y="452"/><use href="#rp" x="1193" y="452"/><use href="#rp" x="1202" y="452"/><use href="#rp" x="1211" y="452"/><use href="#rp" x="1184" y="460"/><use href="#rp" x="1193" y="460"/><use href="#rp" x="1202" y="460"/><use href="#rp" x="1184" y="466"/><use href="#rp" x="1193" y="466"/><use href="#rp" x="1202" y="466"/>
<rect x="728" y="469" width="501" height="13" fill="#000"/>

<!-- right toolbar -->
<rect x="1272" y="75" width="168" height="410" fill="#000"/>
<rect x="1272" y="75" width="5" height="410" fill="#c0c8c4"/>
<rect x="1277" y="75" width="163" height="3" fill="#2c5c50"/>

<g transform="translate(1279,78)"><use href="#bt"/><path d="M12 18V29H27V18" fill="none" stroke="#000" stroke-width="2.500"/><path d="M19.500 7L13 14H16.500V23H22.500V14H26Z" fill="#000"/></g>
<g transform="translate(1319,78)"><use href="#bt"/><path d="M12 20V9H27V20" fill="none" stroke="#000" stroke-width="2.500"/><path d="M19.500 31L13 24H16.500V15H22.500V24H26Z" fill="#000"/></g>
<g transform="translate(1359,78)"><use href="#bt"/><path d="M9 20L19 10L29 20M12 18V30H26V18M16 30V23H22V30M25 14V9" fill="none" stroke="#000" stroke-width="1.300"/></g>
<g transform="translate(1399,78)"><use href="#bt"/><rect x="8.500" y="8.500" width="22" height="21" fill="none" stroke="#000" stroke-width="1.800"/><path d="M19 9V30M9 19H30" stroke="#000" stroke-width="1"/><text x="21" y="25" font-family="Liberation Mono,monospace" font-size="5" fill="#000">xy</text></g>

<g transform="translate(1279,118)"><use href="#bt"/><path d="M17 11H29V27H17" fill="none" stroke="#000" stroke-width="2.500"/><path d="M7 19L15 11V16H20V22H15V27Z" fill="#000"/></g>
<g transform="translate(1319,118)"><use href="#bt"/><path d="M21 11H9V27H21" fill="none" stroke="#000" stroke-width="2.500"/><path d="M31 19L23 11V16H18V22H23V27Z" fill="#000"/></g>
<g transform="translate(1359,118)"><use href="#bt"/><rect x="18.500" y="12.500" width="12" height="13" fill="none" stroke="#000" stroke-width="2"/><path d="M8 14H15V25H9" fill="none" stroke="#000" stroke-width="2"/><path d="M11 10L6 14L11 18Z" fill="#000"/></g>
<g transform="translate(1399,118)"><use href="#bt"/><path d="M30 11H10V19H29V27H8" fill="none" stroke="#000" stroke-width="2"/><path d="M30 8L34 11L30 14M8 24L4 27L8 30" fill="none" stroke="#000" stroke-width=".8"/></g>

<g transform="translate(1279,158)"><use href="#bt"/><rect x="12" y="12" width="14" height="14" fill="none" stroke="#000" stroke-width="2"/><path d="M19 10L14 6H24ZM19 28L14 32H24ZM10 19L5 13V25ZM28 19L33 13V25Z" fill="#000"/></g>
<g transform="translate(1319,158)"><use href="#bt"/><rect x="15" y="15" width="8" height="8" fill="none" stroke="#000" stroke-width="2"/><path d="M19 8L15 12H23ZM19 30L15 26H23ZM8 19L12 15V23ZM30 19L26 15V23Z" fill="#000"/><path d="M19 12V15M19 23V26M12 19H15M23 19H26" stroke="#000"/></g>
<g transform="translate(1359,158)"><use href="#bt"/><text x="19" y="25" text-anchor="middle" font-family="Liberation Sans,sans-serif" font-size="14" font-weight="bold" fill="#000">1:2</text></g>
<g transform="translate(1399,158)"><use href="#bt"/><rect x="8.500" y="8.500" width="22" height="21" fill="none" stroke="#000" stroke-width="2"/><text x="19.500" y="26" text-anchor="middle" font-family="Liberation Sans,sans-serif" font-size="15" font-weight="bold" fill="#000">?</text></g>

<g transform="translate(1279,198)"><use href="#bt"/><path d="M8 10H24M8 13H30M8 17L24 17L30 21H8Z" fill="none" stroke="#000" stroke-width="1.300"/><circle cx="27" cy="11" r="3" fill="#000"/><ellipse cx="20" cy="27" rx="8" ry="5" fill="none" stroke="#000" transform="rotate(-25 20 27)"/><circle cx="18" cy="27" r="1" fill="#000"/><circle cx="22" cy="25" r="1" fill="#000"/></g>
<g transform="translate(1319,198)"><use href="#bt"/><path d="M15 7V31M24 7V31M7 15H31M7 24H31" stroke="#7aacac"/></g>
<g transform="translate(1359,198)"><rect width="38" height="38" fill="#c01818"/><rect x="3" y="3" width="32" height="32" fill="#9edcdc"/><rect x="3.500" y="3.500" width="31" height="31" fill="none" stroke="#000"/><path d="M15 9V20H8V32M15 20H21V30H13" fill="none" stroke="#e01010"/><circle cx="15" cy="9" r="2.500" fill="#0820e0"/><circle cx="8" cy="20" r="2.500" fill="#e01010"/><circle cx="13" cy="30" r="2.500" fill="#0820e0"/><circle cx="27" cy="11" r="3.500" fill="#f01010" stroke="#000" stroke-width=".6"/><circle cx="27" cy="20" r="2.500" fill="none" stroke="#000"/><circle cx="27" cy="28" r="2.500" fill="none" stroke="#000"/></g>
<g transform="translate(1399,198)"><rect width="38" height="38" fill="#c01818"/><rect x="3" y="3" width="32" height="32" fill="#9edcdc"/><rect x="3.500" y="3.500" width="31" height="31" fill="none" stroke="#000"/><path d="M15 9V24M8 20H15M8 30H15" fill="none" stroke="#000"/><path d="M10 15H20M12 13V15M15 13V15M18 13V15" fill="none" stroke="#e01010"/><circle cx="15" cy="8" r="2.500" fill="#000"/><circle cx="8" cy="18" r="2.500" fill="#000"/><circle cx="9" cy="29" r="2.500" fill="#000"/><circle cx="27" cy="11" r="3.500" fill="#f01010" stroke="#000" stroke-width=".6"/><circle cx="27" cy="20" r="2.500" fill="none" stroke="#000"/><circle cx="27" cy="28" r="2.500" fill="none" stroke="#000"/></g>

<!-- white row -->
<g transform="translate(1280,243)"><use href="#bw"/><rect x="5.500" y="5.500" width="27" height="26" fill="none" stroke="#000"/><rect x="9" y="13" width="16" height="17" fill="none" stroke="#000"/><circle cx="17" cy="21" r="6.500" fill="#000"/><path d="M21 15L31 5M25 5H31V11" fill="none" stroke="#000" stroke-width="2.200"/></g>
<g transform="translate(1319,243)"><rect width="38" height="37" fill="#fff"/><rect x="3" y="3" width="32" height="31" fill="#000"/><rect x="17" y="6" width="12" height="13" fill="none" stroke="#c01818" stroke-width="2.500"/><rect x="7" y="23" width="7" height="7" fill="none" stroke="#1020c0" stroke-width="1.500"/><path d="M9 23L16 6M14 28L28 18" stroke="#fff" stroke-width=".8"/></g>
<g transform="translate(1359,243)"><use href="#bw"/><rect x="5.500" y="5.500" width="27" height="26" fill="none" stroke="#000"/><rect x="7" y="15" width="24" height="8" fill="#000"/><path d="M8.500 23V25M11.500 23V25M14.500 23V27M17.500 23V25M20.500 23V25M23.500 23V27M26.500 23V25M29.500 23V25" stroke="#000"/></g>
<g transform="translate(1399,243)"><use href="#bw"/><rect x="4.500" y="4.500" width="28" height="27" fill="none" stroke="#000"/><rect x="9" y="9" width="20" height="19" fill="none" stroke="#000" stroke-dasharray="2 2"/><circle cx="19" cy="18.500" r="7" fill="#000"/></g>

<!-- grey 1 -->
<g transform="translate(1279,282)"><use href="#bg"/><circle cx="10" cy="11" r="4.500" fill="#0820e0"/><circle cx="10" cy="25" r="4.500" fill="#0820e0"/><circle cx="26" cy="25" r="4.500" fill="#0820e0"/><path d="M10 11V25H26" fill="none" stroke="#0820e0" stroke-width="3"/><circle cx="26" cy="11" r="4.500" fill="#f01010"/></g>
<g transform="translate(1319,282)"><use href="#bg"/><path d="M10 9L28 27M28 9L10 27" stroke="#000" stroke-width="2"/><circle cx="19" cy="18" r="4.500" fill="#0a20a0"/></g>
<g transform="translate(1359,282)"><use href="#bg"/><circle cx="11" cy="25" r="3.500" fill="none" stroke="#0820e0" stroke-width="1.700"/><path d="M15 21L23 13M20 13H23V16" fill="none" stroke="#000"/><circle cx="27" cy="10" r="4.500" fill="#f01010"/></g>
<g transform="translate(1399,282)"><use href="#bg"/><circle cx="11" cy="25" r="4.500" fill="#0820e0"/><path d="M15 21L23 13M20 13H23V16" fill="none" stroke="#000"/><circle cx="27" cy="10" r="4.500" fill="#f01010"/></g>

<!-- grey 2 -->
<g transform="translate(1279,322)"><use href="#bg"/><path d="M8 26L28 8" stroke="#e01010" stroke-width="2.500"/><path d="M8 29H30" stroke="#0820e0" stroke-width="2.500"/><path d="M22 20L26 24M22 20V23M22 20H25" fill="none" stroke="#000"/></g>
<g transform="translate(1319,322)"><use href="#bg"/><path d="M8 28L18 18" stroke="#0820e0" stroke-width="2.500"/><path d="M18 18L27 8" stroke="#e01010" stroke-width="2.500"/><path d="M22 26L26 22M23 22H26V25" fill="none" stroke="#000"/></g>
<g transform="translate(1359,322)"><use href="#bg"/><path d="M18 8C28 8 28 26 18 26" fill="none" stroke="#000" stroke-width="1.500"/><path d="M13 26L19 22V30Z" fill="#000"/></g>
<g transform="translate(1399,322)"><use href="#bg"/><path d="M19 6V32" stroke="#000"/><path d="M16 10H6M16 10V29M16 18H8" fill="none" stroke="#1020e0" stroke-width="2.200"/><path d="M23 29V10H33M23 18H31" fill="none" stroke="#d81838" stroke-width="2.500"/></g>

<!-- grey 3 -->
<g transform="translate(1279,362)"><use href="#bg"/><rect x="24" y="6" width="10" height="10" fill="#f01010"/><circle cx="29" cy="11" r="3" fill="#e0e0e0"/><rect x="6.500" y="21.500" width="10" height="10" fill="none" stroke="#0820e0"/><circle cx="11.500" cy="26.500" r="3" fill="#0820e0"/><path d="M17 21L22 17M19 17H22V20" fill="none" stroke="#000"/></g>
<g transform="translate(1319,362)"><use href="#bg"/><path d="M8 18H30" stroke="#e01010" stroke-width="3"/><path d="M16 18H22" stroke="#0820e0" stroke-width="3"/></g>
<g transform="translate(1359,362)"><use href="#bg"/><path d="M8 8V29M30 8V29" stroke="#000"/><rect x="15" y="13" width="8" height="11" fill="none" stroke="#1030c0"/><path d="M9 18H15M23 18H29M12 16L9 18L12 20M26 16L29 18L26 20" fill="none" stroke="#1030c0"/><text x="19" y="21" text-anchor="middle" font-size="7" font-family="Liberation Sans,sans-serif" fill="#1030c0">4</text></g>
<g transform="translate(1399,362)"><use href="#bg"/><path d="M7 7H21V13H32V29H13V21H7Z" fill="#0820e0"/><circle cx="14" cy="14" r="4.500" fill="#d8d8d8"/><circle cx="24" cy="22" r="5" fill="#d8d8d8"/></g>

<!-- grey 4 -->
<g transform="translate(1279,402)"><use href="#bg"/><path d="M7 26L19 9L30 26" fill="none" stroke="#e01010" stroke-width="2"/><path d="M7 27H30" stroke="#0820e0" stroke-width="2.500"/><path d="M19 15V24M16 18L19 14L22 18" fill="none" stroke="#000"/></g>
<g transform="translate(1319,402)"><use href="#bg"/><path d="M8 30L19 4L30 30" fill="none" stroke="#e01010" stroke-width="1.800"/><path d="M8 31L19 21L30 31" fill="none" stroke="#0820e0" stroke-width="1.800"/><path d="M19 12V20M17 15L19 11L21 15" fill="none" stroke="#000"/></g>
<g transform="translate(1359,402)"><use href="#bg"/><path d="M6 24L12 7H26L32 24" fill="none" stroke="#e01010" stroke-width="2.800"/><path d="M6 30L10 22H28L32 30" fill="none" stroke="#0820e0" stroke-width="2.500"/><path d="M19 12V20M17 15L19 11L21 15" fill="none" stroke="#000"/></g>
<g transform="translate(1399,402)"><use href="#bg"/><path d="M8 22L13 7H25L30 22" fill="none" stroke="#e01010" stroke-width="2.800"/><path d="M3 24H35" stroke="#0820e0" stroke-width="3"/><path d="M5 21L10 28M10 21L5 28M28 21L33 28M33 21L28 28" stroke="#000"/><path d="M19 12V20M17 15L19 11L21 15" fill="none" stroke="#000"/></g>

<!-- orange -->
<g transform="translate(1279,442)"><use href="#bo"/><path d="M13 7V24L17 20L21 30L24.500 28L21 18.500H26.500Z" fill="#000"/></g>
<g transform="translate(1319,442)"><use href="#bo"/><rect x="7.500" y="7.500" width="23" height="22" fill="none" stroke="#e81808" stroke-width="2.500"/><path d="M14 9V25L18 21L22 30L25 28L22 19H27Z" fill="#000"/></g>
<g transform="translate(1359,442)"><use href="#bo"/><path d="M13 7H30V30H13L7 24V13Z" fill="none" stroke="#e81808" stroke-width="2.500"/><path d="M14 10V26L18 22L22 31L25 29L22 20H27Z" fill="#000"/></g>
<g transform="translate(1399,442)"><use href="#bo"/><path d="M9 4V22H18V12H27M9 22V30" fill="none" stroke="#000"/><circle cx="28" cy="12" r="3" fill="#40d040" stroke="#000" stroke-width=".6"/><circle cx="9" cy="22" r="3" fill="#d02020" stroke="#000" stroke-width=".6"/><circle cx="9" cy="29" r="3" fill="#40d040" stroke="#000" stroke-width=".6"/><path d="M20 17V30L23.500 27L26 33L28.500 32L26 26H30Z" fill="#000"/></g>

<!-- minimap -->
<rect x="1277" y="483" width="163" height="3" fill="#5c6c68"/>
<rect x="1278" y="534" width="160" height="142" fill="#ff0000" stroke="#c07010"/>
<rect x="1285" y="583" width="146" height="87" fill="none" stroke="#30d8d8" stroke-width="2"/>
<path d="M1286 669.500H1430" stroke="#909090" stroke-width="2"/>
<path d="M1282 666L1289 674M1289 666L1282 674" stroke="#a0f0f0"/>
<rect x="1277" y="726" width="163" height="44" fill="#5ccdb0"/>
<rect x="1277" y="725" width="163" height="2" fill="#bdeedd"/>
<text class="mono" x="1281" y="745" font-size="14" textLength="117">X = 2.555023"</text>
<text class="mono" x="1281" y="760" font-size="14" textLength="126">Y = 10.990709"</text>

<!-- bottom bar -->
<rect x="0" y="771" width="1440" height="35" fill="#ffffd4"/>
<rect x="0" y="771" width="1360" height="1" fill="#ece8c0"/>
<rect x="3" y="773" width="31" height="30" fill="#ffffd4" stroke="#80806a"/>
<rect x="8.500" y="777.500" width="20" height="20" fill="none" stroke="#000"/><path d="M12 781L25 794M12 785V781H16M25 790V794H21" fill="none" stroke="#000"/>
<rect x="35" y="773" width="30" height="30" fill="#ffffd4" stroke="#80806a"/>
<rect x="40.500" y="777.500" width="18" height="20" fill="none" stroke="#000"/><path d="M41 796L56 780M41 796H58" fill="none" stroke="#000"/><text x="50" y="795" font-size="6" font-family="Liberation Mono,monospace" fill="#000">ax</text>
<rect x="66" y="772" width="29" height="32" fill="#5ea898"/><rect x="71" y="776" width="20" height="23" fill="#ffffd4"/>
<rect x="72.500" y="779.500" width="15" height="15" fill="none" stroke="#000"/><path d="M80 780V794M73 787H87M73 785L80 780" fill="none" stroke="#000"/>
<text class="mono" x="98" y="792" font-size="13" textLength="36">X Y :</text>
<rect x="144" y="773" width="171" height="30" fill="#b8b888"/><rect x="147" y="776" width="165" height="24" fill="#ffffd4"/>
<path d="M152 776V791M150 776H154M150 791H154" stroke="#000" stroke-dasharray="1 1"/>
<rect x="318" y="772" width="28" height="32" fill="#5ea898"/><rect x="322" y="776" width="20" height="24" fill="#ffffd4"/>
<rect x="324.500" y="778.500" width="15" height="16" fill="none" stroke="#000"/><path d="M332 781V790M332 791.500V793.500" stroke="#000" stroke-width="1.500"/>
<rect x="347" y="771" width="1.500" height="35" fill="#bdbda0"/>
<text class="mono" x="352" y="791" font-size="12" textLength="216">&lt;M1&gt; - Select first area corner</text>
<rect x="1360" y="771" width="80" height="35" fill="#000"/>
<rect x="1362" y="772" width="76" height="32" fill="#5ccdb0"/>
<rect x="1367" y="775" width="66" height="26" fill="#5ccdb0" stroke="#1c6c58"/>
<text x="1373" y="792" font-family="Liberation Mono,monospace" font-size="14" font-weight="bold" fill="#0a2a24" textLength="35">Inch</text>
<rect x="1417" y="786" width="12" height="5" fill="#8fdcc8" stroke="#2c5c50"/>

<!-- status -->
<rect x="0" y="806" width="1440" height="28" fill="#000"/>
<rect x="0" y="806" width="1440" height="2" fill="#5e8a8a"/>
<rect x="3" y="808" width="1433" height="24" fill="#b0ffff"/>
<path d="M3 830H1436V808" fill="none" stroke="#5e8a8a" stroke-width="2"/>
<text class="mono" x="535" y="824" font-size="12" textLength="371">ss,#11607,Pad(.smd),X=4.885,Y=3.855,rect40.3x36.3,POS</text>
<rect x="0" y="834" width="1440" height="6" fill="#d4d0c8"/>
<rect x="0" y="838" width="1440" height="2" fill="#707070"/>
</svg>
</body>
</html>
